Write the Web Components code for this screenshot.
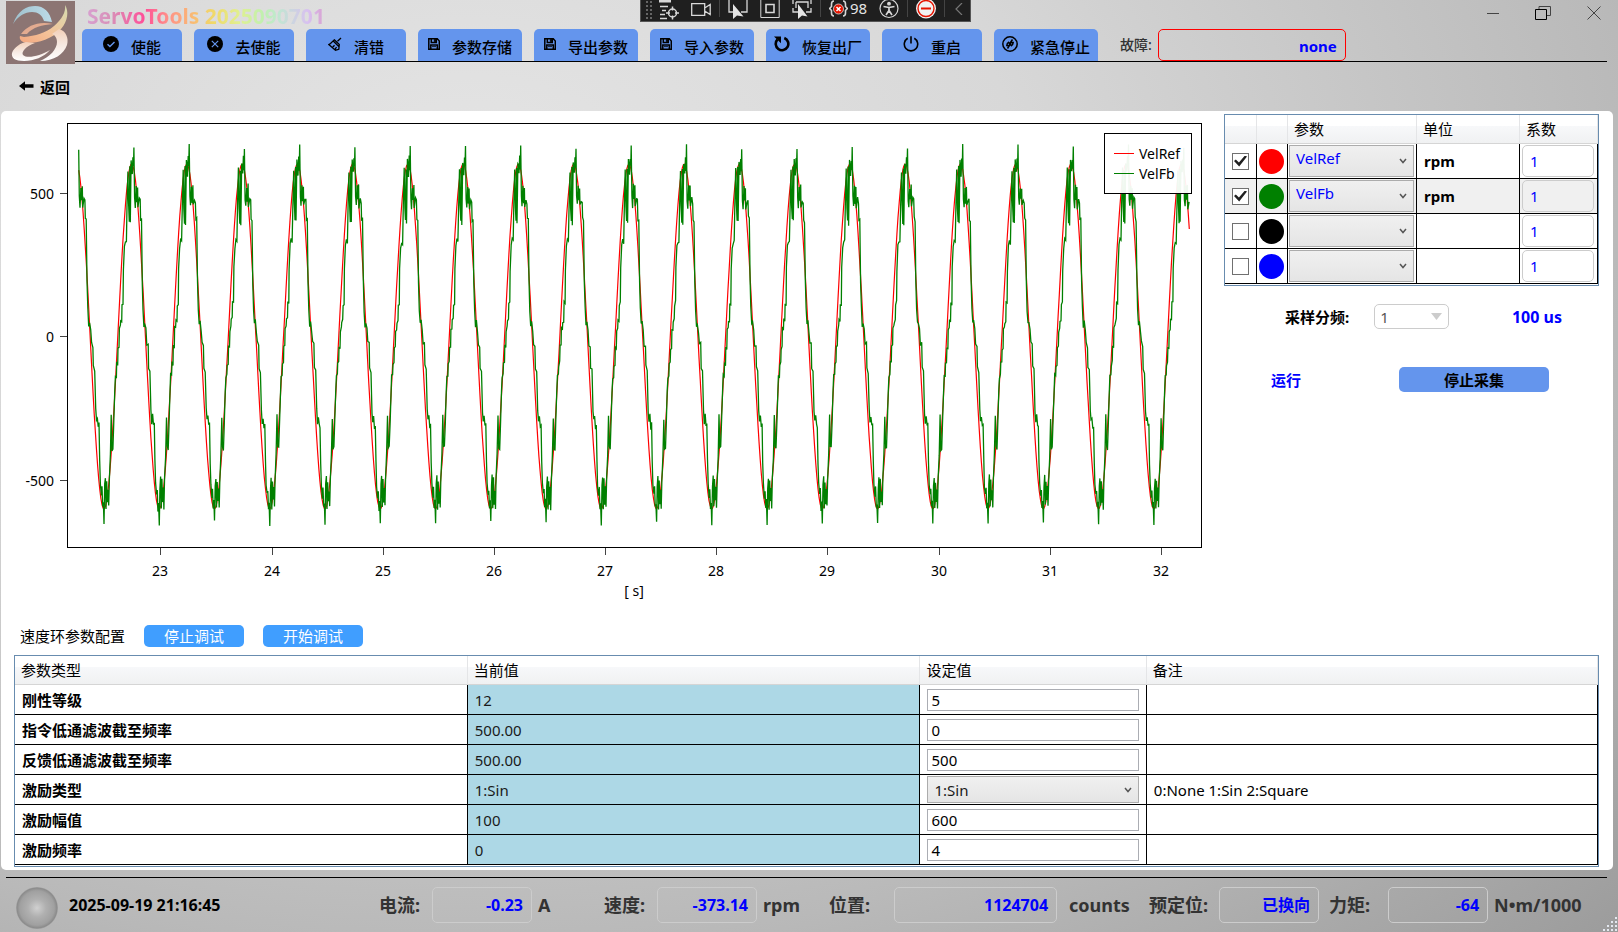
<!DOCTYPE html>
<html lang="zh-CN">

<head>
  <meta charset="UTF-8">
  <meta name="viewport" content="width=device-width, initial-scale=1.0">
  <title>ServoTools</title>
  <style>
    html {
      height: 100%;
    }

    body {
      margin: 0;
      height: 100%;
      font: 15px/20px "Noto Sans", "Noto Sans CJK SC", sans-serif;
      color: #000;
    }
  </style>
</head>

<body>
  <servo-app></servo-app>

  <script>
    const ICONS = {
      check: '<svg width="16" height="16" viewBox="0 0 16 16"><circle cx="8" cy="8" r="8"/><path d="M4.5 8.2l2.4 2.3 4.6-4.6" fill="none" stroke="#6495ed" stroke-width="1.4"/></svg>',
      cross: '<svg width="16" height="16" viewBox="0 0 16 16"><circle cx="8" cy="8" r="8"/><path d="M4.8 4.8l6.4 6.4M11.2 4.8l-6.4 6.4" stroke="#6495ed" stroke-width="1.2"/></svg>',
      broom: '<svg width="14" height="14" viewBox="0 0 14 14"><path d="M13 1L9.500 4.300M6.300 2.800L11.300 7.500L10.800 12.300L7.500 13.200L.8 7.600L2.500 6.500L6.300 2.800ZM5.200 4L10.800 9.500M4.500 10.500L6.500 8.300M7 12.300L8.500 10" fill="none" stroke="#000" stroke-width="1.300"/></svg>',
      save: '<svg width="12" height="12" viewBox="0 0 12 12"><path d="M1 .8h8.300L11.300 3v8.200H.8V.8zM3.300 1v3.500h5V1M2.800 11V7h6.500v4" fill="none" stroke="#000" stroke-width="1.500"/><path d="M6.300 1.500h1.400v2H6.300zM4 8.600h4" stroke="#000" stroke-width=".8"/></svg>',
      restore: '<svg width="16" height="16" viewBox="0 0 16 16"><path d="M10.300 2A6.300 6.300 0 1 1 3.500 3.500" fill="none" stroke="#000" stroke-width="2.600"/><path d="M0 .5H7V7.300Z"/></svg>',
      power: '<svg width="16" height="16" viewBox="0 0 16 16"><path d="M4.700 2.300a6.700 6.700 0 1 0 6.600 0M8 .2v7.300" fill="none" stroke="#000" stroke-width="1.600"/></svg>',
      stop: '<svg width="16" height="16" viewBox="0 0 16 16"><circle cx="8" cy="8" r="7.200" fill="none" stroke="#000" stroke-width="1.500"/><path d="M10.500 3.500L8.600 6.300L11.200 6.500Q11.200 8.700 8.800 10M5.500 12.500L7.300 9.700L4.800 9.500Q4.800 7.300 7.200 6" fill="none" stroke="#000" stroke-width="1.500"/><circle cx="8" cy="8" r="1.400"/></svg>',
      back: '<svg width="15" height="10" viewBox="0 0 15 10"><path d="M0 5L6 .2V3.200H14.500V6.800H6V9.800Z"/></svg>',
      logo: `<svg width="69" height="63" viewBox="0 0 69 63">
        <defs>
          <linearGradient id="sky" x1="0" x2="1"><stop offset="0" stop-color="#9fc0cc"/><stop offset="1" stop-color="#bcdbe8"/></linearGradient>
          <linearGradient id="sun" x1="0" y1="1" x2="1" y2="0"><stop offset="0" stop-color="#f3a77f"/><stop offset=".45" stop-color="#f4c39a"/><stop offset="1" stop-color="#d6dcb0"/></linearGradient>
          <linearGradient id="milk" x1="0" y1="0" x2="0" y2="1"><stop offset="0" stop-color="#f2cfb8"/><stop offset=".5" stop-color="#f6e9e2"/><stop offset="1" stop-color="#fff"/></linearGradient>
        </defs>
        <rect width="69" height="63" fill="#8c7573"/>
        <path d="M7 23C12 9 21 5 29 5C38 5 44 11 46 21L38 20C36 14 32 11 26 11C19 11 12 15 7 23Z" fill="url(#sky)"/>
        <path d="M15 33C22 24 33 20 47 23C36 24 27 26 21 33Z" fill="#e3ab90"/>
        <path d="M59 4C63 10 62 20 55 28C46 38 33 42 21 42C15 41 13 38 14 35L18 36C29 35 40 32 48 25C56 18 60 11 59 4Z" fill="url(#sun)"/>
        <path d="M29 42C20 45 15 51 17 54C21 58 34 55 44 49C38 56 28 60 18 60C9 60 5 57 6 52C8 46 15 42 20 41Z" fill="url(#milk)"/>
        <path d="M53 28C60 30 63 37 61 44C58 53 48 60 34 60C44 56 51 48 51 41C51 37 49 34 46 33Z" fill="url(#milk)"/>
      </svg>`,
      minimize: '<svg width="12" height="14" viewBox="0 0 12 14"><path d="M0 7.500H12" stroke="#444"/></svg>',
      maximize: '<svg width="16" height="14" viewBox="0 0 16 14"><path d="M4 3.500V.5H15.500V9.500H12" fill="none" stroke="#444"/><path d="M.5 3.500H11.500V13.500H.5Z" fill="none" stroke="#000"/></svg>',
      close: '<svg width="14" height="14" viewBox="0 0 14 14"><path d="M.5 .5L13.500 13.500M13.500 .5L.5 13.500" stroke="#444"/></svg>',
      tree: '<svg width="20" height="20" viewBox="0 0 20 20" fill="none" stroke="#d8d8d8"><path d="M0 1h12" stroke-width="3"/><path d="M1 6.500h8M3 10.500h4M1 14.500h5M1 18.500h7" stroke-width="1.300"/><circle cx="13.500" cy="13" r="4" stroke-width="1.500"/><path d="M13.500 6.500v4M13.500 15.500v4M7 13h4M16 13h4" stroke-width="1.500"/></svg>',
      camera: '<svg width="20" height="20" viewBox="0 0 20 20" fill="none" stroke="#d8d8d8" stroke-width="1.300"><path d="M.7 3.700h13v11.600H.7zM13.700 8l5.500-3.500v10L13.700 11"/></svg>',
      pick: '<svg width="20" height="20" viewBox="0 0 20 20"><path d="M1 0V12H5M13 12H19V0" fill="none" stroke="#d8d8d8" stroke-width="1.300"/><path d="M5 4V19L9 15.500L15.500 16.500Z" fill="#e4e4e4"/></svg>',
      frame: '<svg width="20" height="20" viewBox="0 0 20 20" fill="none" stroke="#d8d8d8"><path d="M.8 0V17.500H19.200V0"/><path d="M6 4.500h8v8H6z" stroke-width="1.600"/></svg>',
      multi: '<svg width="20" height="20" viewBox="0 0 20 20"><path d="M1 0V4M1 8V12H6M14 12H19V8M19 4V0M4 2H16V8M4 2V8" fill="none" stroke="#d8d8d8" stroke-width="1.300"/><path d="M6 4V19L10 15.500L15.500 16.500Z" fill="#e4e4e4"/></svg>',
      errors: '<svg width="19" height="20" viewBox="0 0 19 20"><path d="M5 1Q2.500 1 2.500 4V6.500L.6 8.500L2.500 10.500V13Q2.500 16 5 16M14 1Q16.500 1 16.500 4V6.500L18.400 8.500L16.500 10.500V13Q16.500 16 14 16" fill="none" stroke="#d8d8d8" stroke-width="1.600"/><circle cx="9.500" cy="9" r="5" fill="#e51400" stroke="#ddd" stroke-width=".8"/><path d="M7.500 7L11.500 11M11.500 7L7.500 11" stroke="#fff" stroke-width="1.500"/></svg>',
      person: '<svg width="20" height="20" viewBox="0 0 20 20" fill="none" stroke="#d8d8d8" stroke-width="1.200"><circle cx="10" cy="8.500" r="9"/><circle cx="10" cy="3.700" r="1.300" fill="#d8d8d8"/><path d="M4.500 6.500L10 7.500L15.500 6.500M10 7.500V10.500L7 15M10 10.500L13 15" stroke-width="1.700"/></svg>',
      forbid: '<svg width="20" height="20" viewBox="0 0 20 20"><circle cx="10" cy="8.500" r="10" fill="#f2f2f2"/><circle cx="10" cy="8.500" r="8" fill="none" stroke="#e51400" stroke-width="1.400"/><path d="M5 8.500H15" stroke="#e51400" stroke-width="2"/></svg>',
      collapse: '<svg width="8" height="12" viewBox="0 0 8 12"><path d="M7 0L1 6L7 12" fill="none" stroke="#777" stroke-width="1.200"/></svg>',
      chevron: '<svg width="8" height="6" viewBox="0 0 8 6"><path d="M1 1L4 4.500L7 1" fill="none" stroke="#555" stroke-width="1.500"/></svg>',
      triangle: '<svg width="11" height="7" viewBox="0 0 11 7"><path d="M0 0H11L5.500 7Z" fill="#ccc"/></svg>',
    };

    class BaseElement extends HTMLElement {
      constructor() {
        super();
        this.attachShadow({ mode: 'open' });
      }

      connectedCallback() {
        this.shadowRoot.innerHTML = `<style>* { box-sizing: border-box; }${this.styles()}</style>${this.render()}`;
      }

      attr(name) {
        return this.getAttribute(name) || '';
      }

      styles() { return ''; }
      render() { return ''; }
    }

    // Tab-like button of the top bar
    class ToolButton extends BaseElement {
      styles() {
        return `
          :host { display: block; min-width: 100px; }
          :host([wide]) { min-width: 104px; }
          button {
            display: flex; align-items: center; justify-content: center; gap: 12px;
            width: 100%; height: 32px; padding: 4px 0 0; border: 0;
            border-radius: 5px 5px 0 0; background: #6495ed;
            font: inherit; font-weight: 500; color: #000; white-space: nowrap;
          }
          svg { display: block; margin-bottom: 6px; }
        `;
      }

      render() {
        return `<button type="button">${ICONS[this.attr('icon')]}<slot></slot></button>`;
      }
    }

    class PushButton extends BaseElement {
      styles() {
        return `
          :host { display: block; width: 100px; }
          :host([strong]) { width: 150px; font-weight: 700; }
          button {
            display: block; width: 100%; height: 22px; padding: 0; border: 0; border-radius: 5px;
            background: #409eff; color: #fff; font: inherit;
          }
          :host([strong]) button { height: 25px; background: #6495ed; color: #000; }
        `;
      }

      render() {
        return '<button type="button"><slot></slot></button>';
      }
    }

    class ComboBox extends BaseElement {
      styles() {
        return `
          :host { display: grid; align-items: center; }
          select, svg { grid-area: 1 / 1; }
          select {
            appearance: none; width: 100%; height: 100%; padding: 0 20px 0 6px;
            border: 1px solid #acacac; border-radius: 0; outline: 0;
            background: linear-gradient(#f0f0f0, #e5e5e5); color: inherit; font: inherit;
          }
          svg { justify-self: end; margin-right: 7px; pointer-events: none; }
          :host([flat]) select { border: 1px solid #ccc; border-radius: 5px; background: none; padding-left: 5px; }
          :host([raised]) select { padding-bottom: 6px; }
        `;
      }

      render() {
        const options = this.attr('options').split('|');
        const icon = this.hasAttribute('flat') ? ICONS.triangle : ICONS.chevron;
        return `
          <select aria-label="${this.attr('label')}">
            ${options.map(o => `<option ${o === this.attr('value') ? 'selected' : ''}>${o}</option>`).join('')}
          </select>
          ${icon}
        `;
      }
    }

    class DebugToolbar extends BaseElement {
      styles() {
        return `
          :host {
            display: flex; align-items: flex-start; height: 22px;
            background: #1f1f1f; border: 1px solid #555; border-top: 0;
          }
          button { display: flex; gap: 2px; padding: 0; border: 0; background: none; color: #e4e4e4; font: inherit; line-height: 17px; }
          svg { display: block; }
          .grip { width: 8px; height: 20px; margin: 0 6px 0 4px; background: radial-gradient(#666 1px, transparent 1px) 0 0 / 4px 4px; }
          .gap { margin-left: 12px; }
          hr { width: 1px; height: 17px; margin: 0 8px; border: 0; background: #444; }
          .last { margin: 3px 7px 0 2px; }
        `;
      }

      render() {
        return `
          <span class="grip"></span>
          <button aria-label="tree">${ICONS.tree}</button>
          <button class="gap" aria-label="record">${ICONS.camera}</button><hr>
          <button aria-label="select element">${ICONS.pick}</button>
          <button class="gap" aria-label="layout">${ICONS.frame}</button>
          <button class="gap" aria-label="track focus">${ICONS.multi}</button><hr>
          <button>${ICONS.errors}98</button>
          <button class="gap" aria-label="accessibility">${ICONS.person}</button><hr>
          <button aria-label="hot reload">${ICONS.forbid}</button><hr>
          <button class="last" aria-label="collapse">${ICONS.collapse}</button>
        `;
      }
    }

    class ServoHeader extends BaseElement {
      styles() {
        return `
          :host { display: block; padding: 0 11px 0 6px; }
          .bar { display: flex; gap: 7px; height: 62px; padding-top: 1px; border-bottom: 1px solid #000; }
          .bar > svg { flex: none; }
          .main { flex: 1; display: flex; flex-direction: column; justify-content: space-between; }
          .top { display: flex; justify-content: space-between; height: 28px; }
          h1 {
            margin: 3px 0 0 5px; font-size: 21px; line-height: 24px; color: transparent;
            background: linear-gradient(90deg, #d8a0d0, #d890b8 10%, #ff4f98 24%, #ff9088 34%, #f8c070 46%, #f0d868 53%, #e0f090 64%, #c0f0b0 74%, #c0e8d0 80%, #d8c0f0 93%, #d8a0d0);
            background-clip: text; -webkit-background-clip: text;
          }
          .window { display: flex; gap: 36px; padding: 5px 6px 0 0; }
          .window button { padding: 0; border: 0; background: none; height: 14px; }
          .window svg { display: block; }
          .tools { display: flex; gap: 12px; }
          .fault { display: flex; align-items: center; gap: 6px; margin-left: 10px; color: #333; font-size: 14px; font-weight: 500; }
          output {
            width: 188px; height: 32px; padding: 6px 8px 0; border: 1px solid #f00; border-radius: 5px;
            text-align: right; color: #00f; font-size: 15px; font-weight: 700;
          }
        `;
      }

      render() {
        return `
          <div class="bar">
            ${ICONS.logo}
            <div class="main">
              <div class="top">
                <h1>ServoTools 2025090701</h1>
                <div class="window">
                  <button aria-label="最小化">${ICONS.minimize}</button>
                  <button aria-label="还原">${ICONS.maximize}</button>
                  <button aria-label="关闭">${ICONS.close}</button>
                </div>
              </div>
              <div class="tools">
                <tool-button icon="check">使能</tool-button>
                <tool-button icon="cross">去使能</tool-button>
                <tool-button icon="broom">清错</tool-button>
                <tool-button icon="save" wide>参数存储</tool-button>
                <tool-button icon="save" wide>导出参数</tool-button>
                <tool-button icon="save" wide>导入参数</tool-button>
                <tool-button icon="restore" wide>恢复出厂</tool-button>
                <tool-button icon="power">重启</tool-button>
                <tool-button icon="stop" wide>紧急停止</tool-button>
                <div class="fault"><label for="fault">故障:</label><output id="fault">none</output></div>
              </div>
            </div>
          </div>
        `;
      }
    }

    // One period of the measured velocity: [ms, rpm]
    const FEEDBACK = [
      [0, 660], [6, 480], [12, 452], [20, 522], [26, 470], [33, 522], [36, 452], [48, 476], [56, 470], [60, 410], [68, 405],
      [75, 190], [82, 95], [90, 40], [98, 50], [108, 20], [116, -25], [128, -30], [132, -105], [144, -120],
      [153, -258], [160, -298], [168, -278], [176, -315], [183, -308], [189, -437], [195, -518], [204, -555],
      [210, -530], [216, -600], [222, -575], [228, -650], [234, -520], [240, -490], [246, -594], [252, -500],
      [258, -576], [264, -530], [270, -597], [276, -495], [285, -415], [293, -280], [300, -390], [308, -388],
      [316, -298], [324, -195], [330, -138], [339, -136], [342, -96], [351, -92], [354, -38], [363, -35],
      [366, 25], [375, 31], [378, 54], [387, 58], [390, 112], [399, 116], [402, 234], [411, 315], [420, 332],
      [429, 329], [435, 450], [443, 580], [449, 455], [455, 400], [460, 585], [464, 395], [472, 610], [477, 590],
      [482, 565], [488, 620], [493, 585]
    ];
    const PERIOD = 0.497;
    const START = 22.265;
    const END = 32.26;

    class ScopeChart extends BaseElement {
      connectedCallback() {
        super.connectedCallback();
        this.draw();
        new ResizeObserver(() => this.draw()).observe(this);
      }

      styles() {
        return `
          :host { display: block; overflow: hidden; contain: size; }
          svg { display: block; }
          text { font-size: 14px; fill: #000; }
          .mid { text-anchor: middle; }
          .end { text-anchor: end; }
        `;
      }

      render() {
        return '<div class="plot"></div>';
      }

      reference() {
        const points = [];
        for (let t = START; t <= END; t += 0.01) {
          points.push([t, 600 * Math.cos((t - 22.244) / PERIOD * 2 * Math.PI)]);
        }
        return points;
      }

      feedback() {
        const points = [];
        let seed = 7;
        const noise = () => {
          seed = (seed * 16807) % 2147483647;
          return seed / 2147483647 - 0.5;
        };
        for (let cycle = 0; cycle < 21; cycle++) {
          for (const [ms, rpm] of FEEDBACK) {
            const t = START + cycle * PERIOD + ms / 1000;
            if (t > END) return points;
            points.push([t, rpm + noise() * 20]);
          }
        }
        return points;
      }

      draw() {
        const width = this.clientWidth;
        const height = this.clientHeight;
        if (!width || !height) return;
        const left = 53, top = 9, right = width - 13, bottom = height - 67;
        const x = t => left + (t - 22.16) / (32.36 - 22.16) * (right - left);
        const y = v => top + (743 - v) / (743 + 733) * (bottom - top);
        const line = points => points.map(([t, v]) => `${x(t).toFixed(1)},${y(v).toFixed(1)}`).join(' ');
        let ticks = '';
        for (const v of [500, 0, -500]) {
          const at = Math.round(y(v));
          ticks += `<path d="M${left - 7} ${at}.5H${left}" stroke="#444"/><text class="end" x="${left - 13}" y="${at + 6}">${v}</text>`;
        }
        for (let s = 23; s <= 32; s++) {
          const at = Math.round(x(s));
          ticks += `<path d="M${at}.5 ${bottom}V${bottom + 8}" stroke="#444"/><text class="mid" x="${at}" y="${bottom + 29}">${s}</text>`;
        }
        this.shadowRoot.querySelector('.plot').innerHTML = `
          <svg width="${width}" height="${height}" role="img" aria-label="VelRef / VelFb">
            ${ticks}
            <text class="mid" x="${(left + right) / 2}" y="${bottom + 49}">[ s]</text>
            <polyline points="${line(this.reference())}" fill="none" stroke="#f00" stroke-width="1.200"/>
            <polyline points="${line(this.feedback())}" fill="none" stroke="#008000" stroke-width="1.300"/>
            <rect x="${left}.5" y="${top}.5" width="${right - left}" height="${bottom - top}" fill="none" stroke="#000"/>
            <rect x="${right - 97}.5" y="${top + 10}.5" width="87" height="60" fill="#fff" fill-opacity=".94" stroke="#000"/>
            <path d="M${right - 87} ${top + 30}.5h20" stroke="#f00"/>
            <path d="M${right - 87} ${top + 50}.5h20" stroke="#008000"/>
            <text x="${right - 62}" y="${top + 36}">VelRef</text>
            <text x="${right - 62}" y="${top + 56}">VelFb</text>
          </svg>`;
      }
    }

    const GRID_STYLES = `
      :host { display: block; font-weight: 400; }
      table { width: 100%; table-layout: fixed; border-collapse: separate; border-spacing: 0; border: 1px solid #688caf; padding-bottom: 1px; background: #fff; }
      th {
        height: 29px; padding: 0 6px; text-align: left; font-weight: 400;
        background: linear-gradient(#fff 40%, #f7f8fa 40%, #f0f1f2); border-right: 1px solid #e4e5e7; border-bottom: 1px solid #d5d5d5;
      }
      td { padding: 0; border-right: 1px solid #000; border-bottom: 1px solid #000; }
      input, combo-box { display: block; }
      input[type=text] { font: inherit; outline: 0; }
    `;

    class SignalTable extends BaseElement {
      styles() {
        return GRID_STYLES + `
          td { height: 35px; }
          .current td, .current input[type=text] { background: #f0f0f0; }
          td:nth-child(4) { padding: 0 7px; font-weight: 700; }
          input[type=checkbox] {
            appearance: none; display: grid; place-items: center; width: 17px; height: 17px; margin: 0 0 0 7px;
            border: 1px solid #707070; background: #fff;
          }
          input[type=checkbox]:checked::before {
            content: ""; width: 13px; height: 11px; background: #212121;
            clip-path: polygon(0 50%, 14% 36%, 38% 64%, 84% 0, 100% 10%, 40% 100%);
          }
          .dot { display: block; width: 25px; height: 25px; margin: 0 auto 0 2px; border-radius: 50%; background: var(--dot); }
          combo-box { display: grid; height: 32px; margin: 0 2px 0 1px; color: #00f; }
          input[type=text] {
            width: calc(100% - 5px); height: 32px; margin-left: 2px; padding: 0 7px;
            border: 1px solid #ccc; border-radius: 5px; background: #fff; color: #00f;
          }
        `;
      }

      render() {
        const rows = [
          ['#ff0000', 'VelRef', 'rpm', '1'],
          ['#008000', 'VelFb', 'rpm', '1'],
          ['#000000', '', '', '1'],
          ['#0000ff', '', '', '1'],
        ];
        return `
          <table>
            <colgroup><col style="width: 32px"><col style="width: 31px"><col style="width: 129px"><col style="width: 103px"><col></colgroup>
            <thead><tr><th></th><th></th><th>参数</th><th>单位</th><th>系数</th></tr></thead>
            <tbody>
              ${rows.map(([color, name, unit, scale], i) => `
                <tr class="${i === 1 ? 'current' : ''}">
                  <td><input type="checkbox" aria-label="通道 ${i + 1}" ${name ? 'checked' : ''}></td>
                  <td><span class="dot" style="--dot: ${color}"></span></td>
                  <td><combo-box raised label="参数 ${i + 1}" options="|VelRef|VelFb" value="${name}"></combo-box></td>
                  <td>${unit}</td>
                  <td><input type="text" aria-label="系数 ${i + 1}" value="${scale}"></td>
                </tr>`).join('')}
            </tbody>
          </table>
        `;
      }
    }

    class ParamTable extends BaseElement {
      styles() {
        return GRID_STYLES + `
          td { height: 30px; padding: 0 7px; }
          td:first-child { font-weight: 700; }
          td:nth-child(2) { background: #add8e6; }
          td:nth-child(2), td:nth-child(3) { color: #1a1a1a; }
          input[type=text] { width: 100%; height: 22px; padding: 0 3px; border: 1px solid #abadb3; }
          combo-box { display: grid; height: 27px; }
        `;
      }

      render() {
        const rows = [
          ['刚性等级', '12', '5', ''],
          ['指令低通滤波截至频率', '500.00', '0', ''],
          ['反馈低通滤波截至频率', '500.00', '500', ''],
          ['激励类型', '1:Sin', '1:Sin', '0:None 1:Sin 2:Square'],
          ['激励幅值', '100', '600', ''],
          ['激励频率', '0', '4', ''],
        ];
        const editor = (name, value) => value.includes(':')
          ? `<combo-box label="${name}" options="0:None|1:Sin|2:Square" value="${value}"></combo-box>`
          : `<input type="text" aria-label="${name}" value="${value}">`;
        return `
          <table>
            <colgroup><col style="width: 28.6%"><col style="width: 28.6%"><col style="width: 14.3%"><col></colgroup>
            <thead><tr><th>参数类型</th><th>当前值</th><th>设定值</th><th>备注</th></tr></thead>
            <tbody>
              ${rows.map(([name, current, value, note]) => `
                <tr><td>${name}</td><td>${current}</td><td>${editor(name, value)}</td><td>${note}</td></tr>`).join('')}
            </tbody>
          </table>
        `;
      }
    }

    class CapturePanel extends BaseElement {
      styles() {
        return `
          :host { display: flex; flex-direction: column; font-weight: 700; }
          .row { display: flex; align-items: center; }
          .rate { margin-top: 18px; padding: 0 37px 0 61px; }
          combo-box { width: 75px; height: 25px; margin: 0 auto 0 25px; color: #555; font-weight: 400; }
          .blue { color: #00f; }
          .rate .blue { font-size: 16px; }
          .run { justify-content: space-between; margin-top: 38px; padding: 0 50px 0 47px; }
        `;
      }

      render() {
        return `
          <signal-table></signal-table>
          <div class="row rate">
            <span>采样分频:</span>
            <combo-box flat label="采样分频" options="1|2|4|8" value="1"></combo-box>
            <span class="blue">100 us</span>
          </div>
          <div class="row run">
            <span class="blue">运行</span>
            <push-button strong>停止采集</push-button>
          </div>
        `;
      }
    }

    class StatusField extends BaseElement {
      styles() {
        return `
          :host { display: flex; align-items: center; font-size: 18px; font-weight: 700; color: #333; white-space: nowrap; }
          label { min-width: 53px; padding-right: var(--lead, 0); }
          output {
            min-width: var(--field, 100px); height: 36px; padding: 7px 8px; border: 1px solid #ccc; border-radius: 5px;
            text-align: right; font-size: 16px; color: #00f;
          }
          .unit { margin-left: var(--unit-gap, 6px); }
        `;
      }

      render() {
        return `<label for="value">${this.attr('label')}</label><output id="value">${this.attr('value')}</output><span class="unit">${this.attr('unit')}</span>`;
      }
    }

    class StatusBar extends BaseElement {
      styles() {
        return `
          :host { display: block; padding: 0 11px 0 6px; }
          .bar {
            display: grid; grid-template-columns: 373fr 225fr 225fr 320fr 180fr 278fr; align-items: center;
            height: 55px; border-top: 1px solid #000; position: relative;
          }
          .clock { display: flex; align-items: center; gap: 11px; padding: 6px 0 0 10px; font-size: 16px; font-weight: 700; }
          .lamp { width: 42px; height: 42px; border-radius: 50%; background: radial-gradient(#d0d0d0, #b0b0b0 30%, #a0a0a0 58%, #8c8c8c 67%, #aaa 72%); }
          time { padding-bottom: 6px; }
          .position { --field: 163px; --lead: 24px; --unit-gap: 12px; }
          .preset { --lead: 11px; }
          .torque { --lead: 18px; }
          .grip { position: absolute; right: -10px; bottom: 1px; }
        `;
      }

      render() {
        const dots = [[12, 0], [8, 4], [12, 4], [4, 8], [8, 8], [12, 8], [0, 12], [4, 12], [8, 12], [12, 12]];
        return `
          <div class="bar">
            <div class="clock"><span class="lamp"></span><time>2025-09-19 21:16:45</time></div>
            <status-field label="电流:" value="-0.23" unit="A"></status-field>
            <status-field label="速度:" value="-373.14" unit="rpm"></status-field>
            <status-field class="position" label="位置:" value="1124704" unit="counts"></status-field>
            <status-field class="preset" label="预定位:" value="已换向"></status-field>
            <status-field class="torque" label="力矩:" value="-64" unit="N•m/1000"></status-field>
            <svg class="grip" width="14" height="14" fill="#e4e8f0">${dots.map(([x, y]) => `<rect x="${x}" y="${y}" width="2" height="2"/>`).join('')}</svg>
          </div>
        `;
      }
    }

    class ServoApp extends BaseElement {
      styles() {
        return `
          :host {
            display: flex; flex-direction: column; min-height: 100%; position: relative;
            background: radial-gradient(ellipse farthest-corner at 29% 20%, #e5e5e5, #d8d8d8 34%, #cbcbcb 50%, #b9b9b9 72%, #9c9c9c);
          }
          debug-toolbar { position: absolute; top: 0; left: 640px; }
          nav { display: flex; align-items: center; height: 49px; padding-left: 19px; }
          a { display: flex; align-items: center; gap: 6px; color: #000; text-decoration: none; font-weight: 700; }
          a svg { margin-bottom: 2px; }
          main {
            flex: 1; display: flex; flex-direction: column; margin: 0 5px 7px 1px; padding: 3px 14px 3px 13px;
            border-radius: 5px; background: #fff;
          }
          .scope { flex: 1; display: flex; gap: 10px; min-height: 460px; margin-bottom: 11px; }
          scope-chart { flex: 1; min-width: 0; }
          capture-panel { width: 375px; }
          .actions { display: flex; align-items: center; gap: 19px; padding: 0 6px; margin-bottom: 8px; }
          h2 { margin: 0; font-size: 15px; font-weight: 400; line-height: 22px; }
        `;
      }

      render() {
        return `
          <servo-header></servo-header>
          <nav><a href="#back">${ICONS.back}<span>返回</span></a></nav>
          <main>
            <div class="scope">
              <scope-chart></scope-chart>
              <capture-panel></capture-panel>
            </div>
            <div class="actions">
              <h2>速度环参数配置</h2>
              <push-button>停止调试</push-button>
              <push-button>开始调试</push-button>
            </div>
            <param-table></param-table>
          </main>
          <status-bar></status-bar>
          <debug-toolbar></debug-toolbar>
        `;
      }
    }

    customElements.define('tool-button', ToolButton);
    customElements.define('push-button', PushButton);
    customElements.define('combo-box', ComboBox);
    customElements.define('debug-toolbar', DebugToolbar);
    customElements.define('servo-header', ServoHeader);
    customElements.define('scope-chart', ScopeChart);
    customElements.define('signal-table', SignalTable);
    customElements.define('param-table', ParamTable);
    customElements.define('capture-panel', CapturePanel);
    customElements.define('status-field', StatusField);
    customElements.define('status-bar', StatusBar);
    customElements.define('servo-app', ServoApp);
  </script>
</body>

</html>
